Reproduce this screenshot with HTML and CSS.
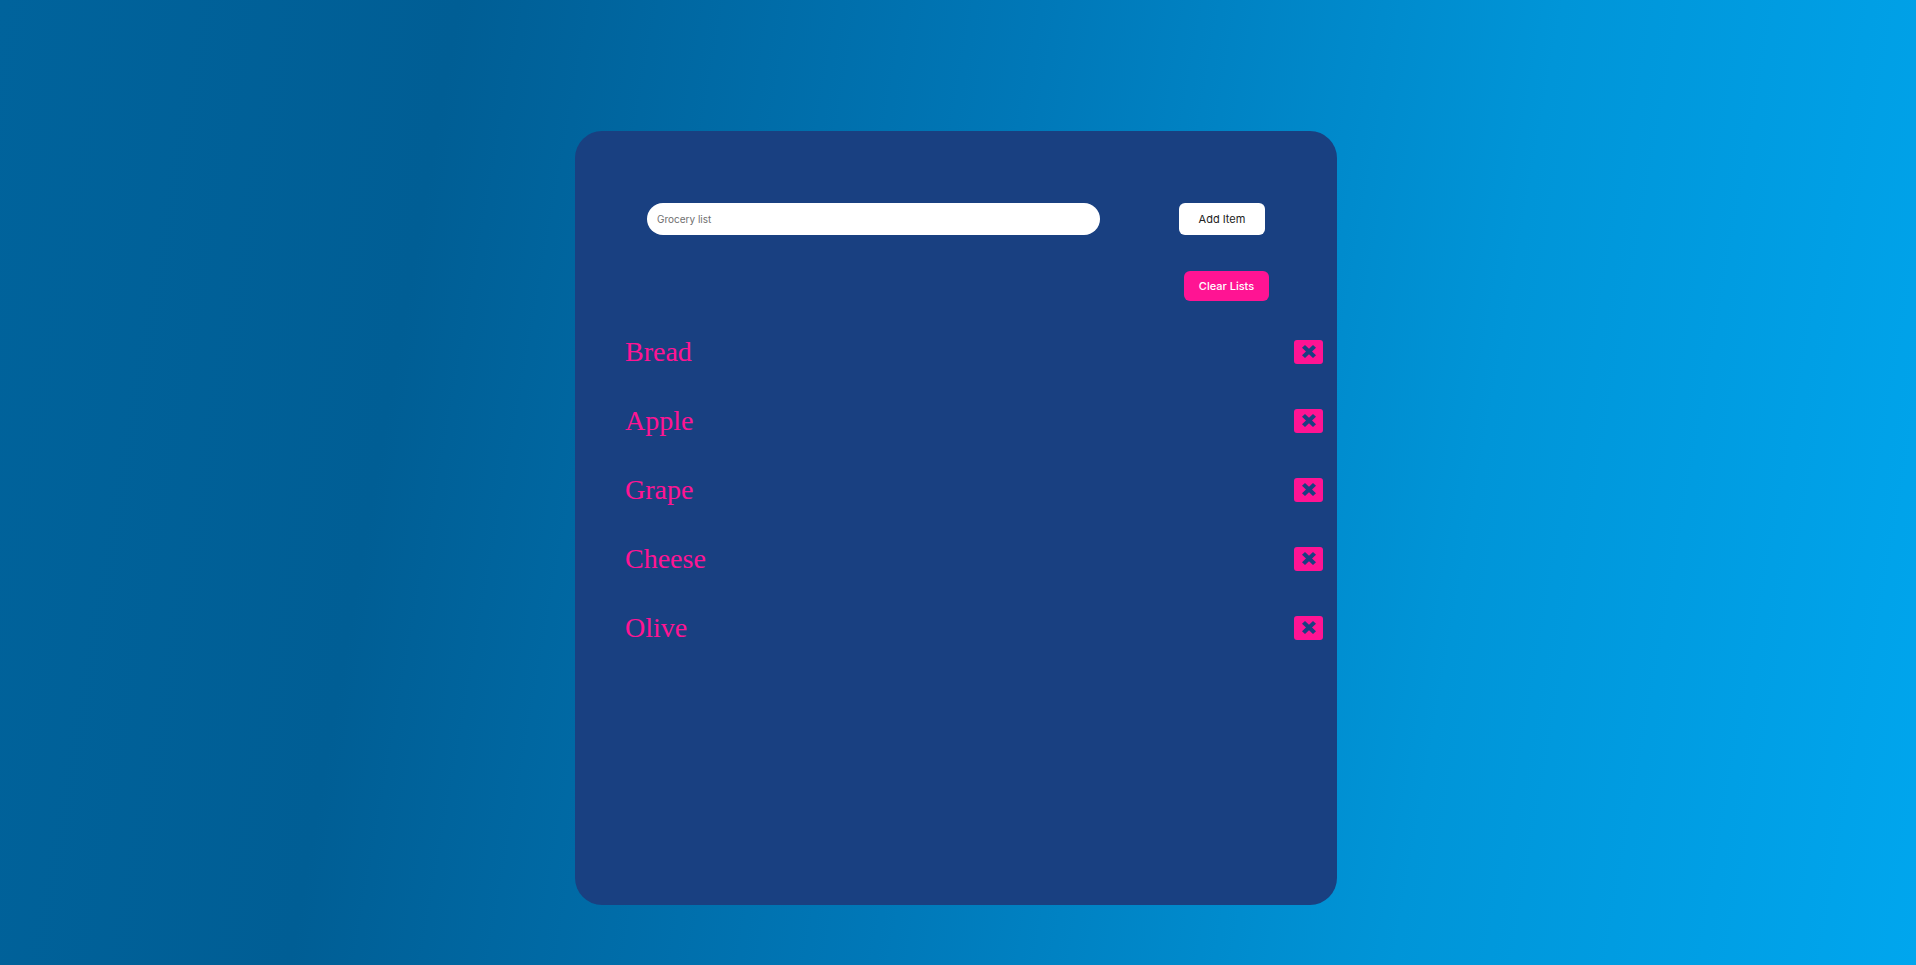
FILE: index.html
```html
<!DOCTYPE html>
<html lang="en">
<head>
<meta charset="utf-8">
<title>Grocery list</title>
<link rel="stylesheet" href="styles.css">
</head>
<body>
<div class="page">
  <main class="card">
    <form class="entry">
      <input class="entry-input" type="text" placeholder="Grocery list">
      <button class="add-btn" type="button">Add Item</button>
    </form>
    <div class="clear-row">
      <button class="clear-btn" type="button">Clear Lists</button>
    </div>
    <ul class="items">
      <li class="item"><span class="item-name">Bread</span><button class="del-btn" type="button"><svg class="x-icon" viewBox="0 0 14 14" preserveAspectRatio="none"><path d="M0 3 L3 0 L7 4 L11 0 L14 3 L10 7 L14 11 L11 14 L7 10 L3 14 L0 11 L4 7 Z"/></svg></button></li>
      <li class="item"><span class="item-name">Apple</span><button class="del-btn" type="button"><svg class="x-icon" viewBox="0 0 14 14" preserveAspectRatio="none"><path d="M0 3 L3 0 L7 4 L11 0 L14 3 L10 7 L14 11 L11 14 L7 10 L3 14 L0 11 L4 7 Z"/></svg></button></li>
      <li class="item"><span class="item-name">Grape</span><button class="del-btn" type="button"><svg class="x-icon" viewBox="0 0 14 14" preserveAspectRatio="none"><path d="M0 3 L3 0 L7 4 L11 0 L14 3 L10 7 L14 11 L11 14 L7 10 L3 14 L0 11 L4 7 Z"/></svg></button></li>
      <li class="item"><span class="item-name">Cheese</span><button class="del-btn" type="button"><svg class="x-icon" viewBox="0 0 14 14" preserveAspectRatio="none"><path d="M0 3 L3 0 L7 4 L11 0 L14 3 L10 7 L14 11 L11 14 L7 10 L3 14 L0 11 L4 7 Z"/></svg></button></li>
      <li class="item"><span class="item-name">Olive</span><button class="del-btn" type="button"><svg class="x-icon" viewBox="0 0 14 14" preserveAspectRatio="none"><path d="M0 3 L3 0 L7 4 L11 0 L14 3 L10 7 L14 11 L11 14 L7 10 L3 14 L0 11 L4 7 Z"/></svg></button></li>
    </ul>
  </main>
</div>
</body>
</html>
```

FILE: styles.css
```css
* { box-sizing: border-box; }

html, body {
  margin: 0;
  height: 100%;
}

body {
  background: linear-gradient(100deg, #00639c 0%, #005e95 22%, #0078b8 50%, #0095d8 75%, #00a6ee 100%);
  font-family: "Inter", "Liberation Sans", sans-serif;
  overflow: hidden;
}

.page {
  padding: 131px 0 0 575px;
}

.card {
  width: 762px;
  height: 774px;
  background: #194081;
  border-radius: 27px;
  padding-top: 72px;
}

.entry {
  display: flex;
  justify-content: space-between;
  align-items: center;
  padding: 0 72px;
  margin: 0;
}

.entry-input {
  width: 453px;
  height: 32px;
  border: none;
  border-radius: 16px;
  background: #fff;
  padding: 0 10px;
  font-family: "Inter", "Liberation Sans", sans-serif;
  font-size: 10px;
  color: #222;
  outline: none;
}

.entry-input::placeholder {
  color: #6f6f6f;
}

.add-btn {
  width: 86px;
  height: 32px;
  border: none;
  border-radius: 6px;
  background: #fff;
  color: #222;
  font-family: "Inter", "Liberation Sans", sans-serif;
  font-size: 11px;
  padding: 0;
}

.clear-row {
  display: flex;
  justify-content: flex-end;
  padding-right: 68px;
  margin-top: 36px;
}

.clear-btn {
  width: 85px;
  height: 30px;
  border: none;
  border-radius: 6px;
  background: #ff1493;
  color: #fff;
  font-family: "Inter", "Liberation Sans", sans-serif;
  font-size: 11px;
  font-weight: 500;
  padding: 0;
}

.items {
  list-style: none;
  margin: 16px 0 0;
  padding: 0 14px 0 50px;
}

.item {
  display: flex;
  justify-content: space-between;
  align-items: center;
  height: 69px;
}

.item-name {
  font-family: "Liberation Serif", "Times New Roman", serif;
  font-size: 28px;
  color: #ff1493;
}

.del-btn {
  width: 29px;
  height: 24px;
  border: none;
  border-radius: 3px;
  background: #ff1493;
  padding: 0;
  display: flex;
  align-items: center;
  justify-content: center;
}

.x-icon {
  display: block;
  width: 14px;
  height: 13px;
  fill: #194081;
}
```
